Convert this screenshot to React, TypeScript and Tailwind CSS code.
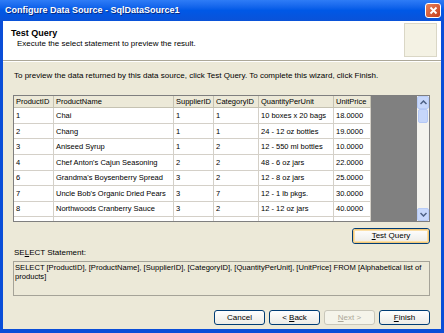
import React from 'react';

const rows = [
  ['1', 'Chai', '1', '1', '10 boxes x 20 bags', '18.0000'],
  ['2', 'Chang', '1', '1', '24 - 12 oz bottles', '19.0000'],
  ['3', 'Aniseed Syrup', '1', '2', '12 - 550 ml bottles', '10.0000'],
  ['4', "Chef Anton's Cajun Seasoning", '2', '2', '48 - 6 oz jars', '22.0000'],
  ['6', "Grandma's Boysenberry Spread", '3', '2', '12 - 8 oz jars', '25.0000'],
  ['7', "Uncle Bob's Organic Dried Pears", '3', '7', '12 - 1 lb pkgs.', '30.0000'],
  ['8', 'Northwoods Cranberry Sauce', '3', '2', '12 - 12 oz jars', '40.0000'],
  ['', '', '', '', '', ''],
];

const headers = ['ProductID', 'ProductName', 'SupplierID', 'CategoryID', 'QuantityPerUnit', 'UnitPrice'];
const widths = ['w-[40px]', 'w-[120px]', 'w-[40px]', 'w-[45px]', 'w-[75px]', 'w-[37px]'];

function XpButton({ children, isDefault, disabled, className }: { children: React.ReactNode; isDefault?: boolean; disabled?: boolean; className?: string }) {
  return (
    <div
      className={`flex items-center justify-center rounded-[3px] border ${
        disabled ? 'border-[#C9C7BA] text-[#ACA899] bg-[#F5F4EA]' : 'border-[#003C74] text-black bg-gradient-to-b from-white to-[#ECEBE6]'
      } ${className ?? ''}`}
    >
      <div
        className={`w-full h-full flex items-center justify-center rounded-[2px] ${
          isDefault ? 'border border-[#F2C778] shadow-[inset_0_0_0_1px_#FBE0A8]' : ''
        }`}
      >
        {children}
      </div>
    </div>
  );
}

export default function App() {
  return (
    <div
      className="w-[444px] h-[333px] flex flex-col bg-[#0A4ED8] overflow-hidden text-[8px] text-black"
      style={{ fontFamily: '"Liberation Sans", Arial, sans-serif' }}
    >
      {/* title bar */}
      <div className="h-[21px] flex items-center justify-between pl-[5px] pr-[3px] bg-gradient-to-b from-[#2E7CF6] via-[#0058E6] to-[#0A52D8]">
        <span className="text-white font-bold text-[9px] [text-shadow:1px_1px_0_#0A2A80]">
          Configure Data Source - SqlDataSource1
        </span>
        <div className="w-[16px] h-[15px] rounded-[3px] border border-white bg-gradient-to-br from-[#E8825C] to-[#C43B16] flex items-center justify-center">
          <svg width="9" height="9" viewBox="0 0 9 9">
            <path d="M1.5 1.5 L7.5 7.5 M7.5 1.5 L1.5 7.5" stroke="white" strokeWidth="1.8" />
          </svg>
        </div>
      </div>

      <div className="flex-1 mx-[3px] mb-[4px] flex flex-col bg-[#ECE9D8]">
        {/* header */}
        <div className="h-[40px] bg-white flex justify-between border-b border-[#ACA899] pl-[8px] pr-[4px]">
          <div className="pt-[7px]">
            <div className="font-bold text-[9px] leading-[11px]">Test Query</div>
            <div className="pl-[6px] leading-[10px]">Execute the select statement to preview the result.</div>
          </div>
          <div className="w-[33px] h-[34px] mt-[2px] bg-[#F4F2E4] border border-[#DAD7C6]" />
        </div>
        <div className="h-px bg-white" />

        <div className="flex-1 flex flex-col pl-[10px] pr-[11px]">
          <div className="pt-[8px] pl-[1px] h-[33px]">
            To preview the data returned by this data source, click Test Query. To complete this wizard, click Finish.
          </div>

          {/* grid */}
          <div className="h-[127px] flex border border-[#7F7F7F] bg-[#808080] text-[7.5px]">
            <div className="flex flex-col overflow-hidden">
              <div className="flex h-[15px] bg-[#ECE9D8]">
                {headers.map((h, i) => (
                  <div key={h} className={`${widths[i]} shrink-0 pl-[2px] flex items-center border-r border-b border-[#C5C2B2]`}>
                    {h}
                  </div>
                ))}
              </div>
              {rows.map((r, ri) => (
                <div key={ri} className="flex h-[15.6px] shrink-0 bg-white">
                  {r.map((c, ci) => (
                    <div key={ci} className={`${widths[ci]} shrink-0 pl-[2px] flex items-center border-r border-b border-[#D4D0C8] whitespace-nowrap overflow-hidden`}>
                      {c}
                    </div>
                  ))}
                </div>
              ))}
            </div>
            <div className="flex-1" />
            {/* scrollbar */}
            <div className="w-[12px] flex flex-col bg-[#F4F3EE]">
              <div className="h-[13px] rounded-[2px] border border-[#B8CCF7] bg-[#C8D8FB] flex items-center justify-center">
                <svg width="7" height="5" viewBox="0 0 7 5"><path d="M0.5 4 L3.5 1 L6.5 4" stroke="#4D6185" strokeWidth="1.5" fill="none" /></svg>
              </div>
              <div className="h-[14px] mx-px rounded-[2px] bg-[#C6D6FA] border border-[#B4C8F6]" />
              <div className="flex-1" />
              <div className="h-[13px] rounded-[2px] border border-[#B8CCF7] bg-[#C8D8FB] flex items-center justify-center">
                <svg width="7" height="5" viewBox="0 0 7 5"><path d="M0.5 1 L3.5 4 L6.5 1" stroke="#4D6185" strokeWidth="1.5" fill="none" /></svg>
              </div>
            </div>
          </div>

          <div className="flex justify-end mt-[6px]">
            <XpButton isDefault className="w-[78px] h-[16px]">
              <span><span className="underline">T</span>est Query</span>
            </XpButton>
          </div>

          <div className="mt-[3px] pl-[1px]">
            SE<span className="underline">L</span>ECT Statement:
          </div>
          <div className="mt-[2px] h-[35px] border border-[#A5A398] bg-[#ECE9D8] px-[1px] pt-px leading-[9px] text-[7.6px]">
            SELECT [ProductID], [ProductName], [SupplierID], [CategoryID], [QuantityPerUnit], [UnitPrice] FROM [Alphabetical list of products]
          </div>

          <div className="flex justify-end gap-[4px] mt-[14px]">
            <XpButton className="w-[51px] h-[15px]">Cancel</XpButton>
            <XpButton className="w-[51px] h-[15px]">
              <span>&lt; <span className="underline">B</span>ack</span>
            </XpButton>
            <XpButton disabled className="w-[51px] h-[15px]">
              <span><span className="underline">N</span>ext &gt;</span>
            </XpButton>
            <XpButton className="w-[51px] h-[15px]">
              <span><span className="underline">F</span>inish</span>
            </XpButton>
          </div>
        </div>
      </div>
    </div>
  );
}
